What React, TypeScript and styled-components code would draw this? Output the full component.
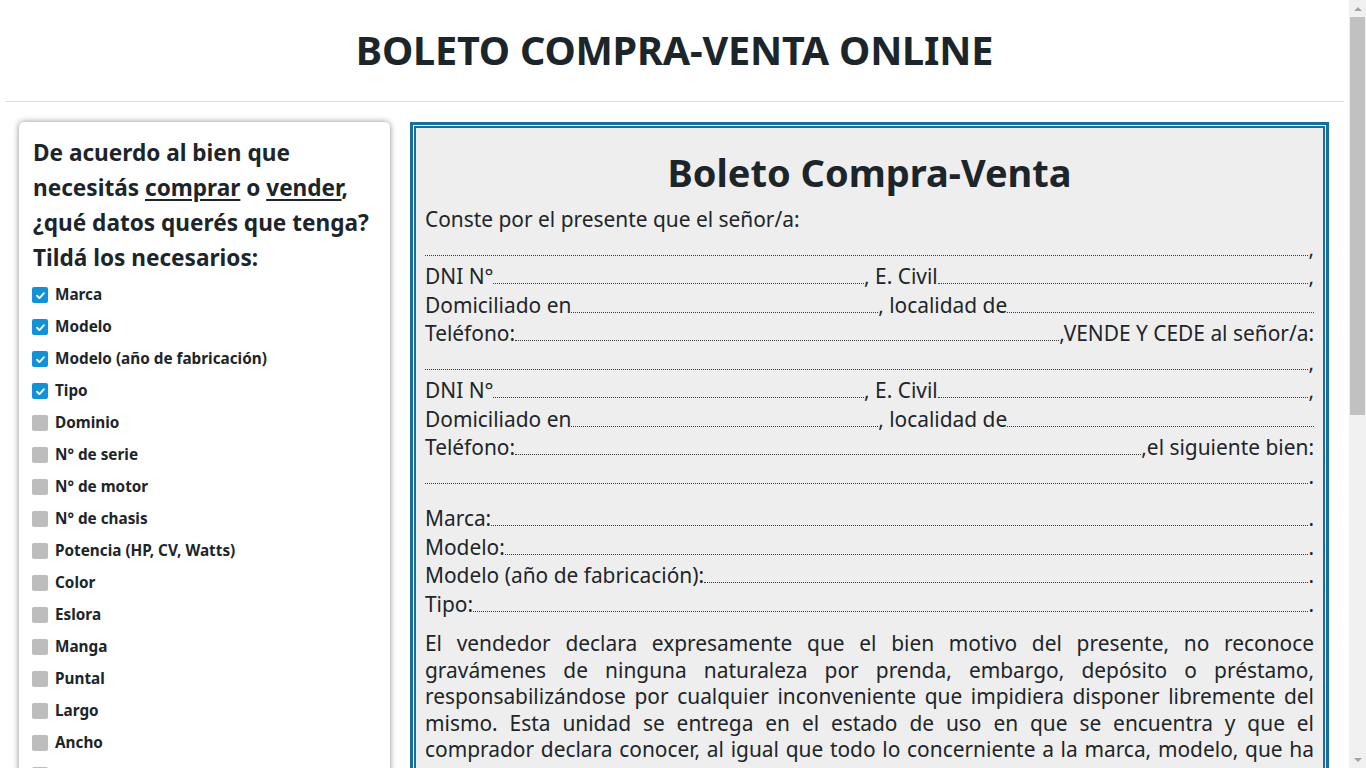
import React from "react";
import styled, { createGlobalStyle } from "styled-components";

const GlobalStyle = createGlobalStyle`
  html, body { margin: 0; padding: 0; }
  body {
    font-family: "Noto Sans", "Open Sans", sans-serif;
    color: #212529;
    background: #ffffff;
    padding-right: 17px;
  }
  * { box-sizing: border-box; }
`;

const ScrollTrack = styled.div`
  position: fixed;
  top: 0;
  right: 0;
  width: 17px;
  height: 100vh;
  background: #f0f0f0;
  display: flex;
  flex-direction: column;
  align-items: center;
`;

const ScrollArrow = styled.div<{ $down?: boolean }>`
  height: 17px;
  width: 17px;
  display: flex;
  align-items: center;
  justify-content: center;
  &::after {
    content: "";
    border-left: 4px solid transparent;
    border-right: 4px solid transparent;
    ${(p) => (p.$down ? "border-top: 4px solid #a3a3a3;" : "border-bottom: 4px solid #a3a3a3;")}
  }
`;

const ScrollThumb = styled.div`
  width: 15px;
  height: 398px;
  background: #c1c1c1;
`;

const ScrollSpacer = styled.div`
  flex: 1;
`;

const Header = styled.header`
  margin: 0 5px;
  height: 102px;
  border-bottom: 1px solid #dedede;
  display: flex;
  align-items: center;
  justify-content: center;
`;

const Title = styled.h1`
  margin: 0 0 2px;
  font-size: 39.6px;
  font-weight: 700;
  letter-spacing: -0.2px;
  color: #1c2529;
`;

const Main = styled.main`
  display: flex;
  align-items: flex-start;
  gap: 20px;
  padding: 20px 20px 40px 19px;
`;

const Sidebar = styled.aside`
  flex: 0 0 371px;
  background: #fff;
  border-radius: 5px;
  box-shadow: 0 0 6px rgba(0, 0, 0, 0.45);
  padding: 13px 10px 20px 14px;
`;

const Question = styled.h3`
  margin: 0 0 3px;
  font-size: 22.6px;
  line-height: 35px;
  font-weight: 700;
  color: #1c2529;
  u { text-underline-offset: 3px; text-decoration-thickness: 2px; }
`;

const OptionList = styled.ul`
  list-style: none;
  margin: 0;
  padding: 0;
`;

const Option = styled.li`
  display: flex;
  align-items: center;
  gap: 7px;
  height: 32px;
  font-size: 15.3px;
  font-weight: 700;
  color: #1c2529;
`;

const Box = styled.span<{ $checked: boolean }>`
  width: 16px;
  height: 16px;
  margin-left: -1px;
  border-radius: 2px;
  background: ${(p) => (p.$checked ? "#1292d6" : "#bdbdbd")};
  display: inline-flex;
  align-items: center;
  justify-content: center;
  flex: 0 0 16px;
  margin-top: 2px;
`;

const Doc = styled.section`
  flex: 1;
  min-width: 0;
  background: #eeeeee;
  border: 3px solid #17709b;
  box-shadow: inset 0 0 0 1px #ffffff, inset 0 0 0 3px #17709b;
  padding: 24px 12px 40px 12px;
  color: #212529;
  font-size: 20.9px;
`;

const DocTitle = styled.h2`
  margin: 0 0 10px;
  text-align: center;
  font-size: 38px;
  line-height: 46px;
  font-weight: 700;
  color: #1c2529;
`;

const Line = styled.div`
  display: flex;
  align-items: baseline;
  line-height: 28.5px;
  height: 28.5px;
  white-space: nowrap;
`;

const Fill = styled.span`
  flex: 1;
  height: 0;
  border-bottom: 1px dotted #3a3a3a;
`;

const Block = styled.div`
  margin-top: 14px;
`;

const Paragraph = styled.p`
  margin: 12px 0 0;
  text-align: justify;
  line-height: 26.5px;
`;

const Check = () => (
  <svg width="11" height="11" viewBox="0 0 12 12">
    <path d="M2.2 6.3 L4.8 8.8 L9.8 3.4" fill="none" stroke="#fff" strokeWidth="2" strokeLinecap="round" strokeLinejoin="round" />
  </svg>
);

const options: [string, boolean][] = [
  ["Marca", true],
  ["Modelo", true],
  ["Modelo (año de fabricación)", true],
  ["Tipo", true],
  ["Dominio", false],
  ["N° de serie", false],
  ["N° de motor", false],
  ["N° de chasis", false],
  ["Potencia (HP, CV, Watts)", false],
  ["Color", false],
  ["Eslora", false],
  ["Manga", false],
  ["Puntal", false],
  ["Largo", false],
  ["Ancho", false],
  ["Calado", false],
  ["Matrícula", false],
];

const Person = ({ end }: { end: string }) => (
  <>
    <Line>
      <Fill />,
    </Line>
    <Line>
      DNI N°<Fill />, E. Civil<Fill />,
    </Line>
    <Line>
      Domiciliado en<Fill />, localidad de<Fill />
    </Line>
    <Line>
      Teléfono:<Fill />
      {end}
    </Line>
  </>
);

export default function App() {
  return (
    <>
      <GlobalStyle />
      <Header>
        <Title>BOLETO COMPRA-VENTA ONLINE</Title>
      </Header>
      <Main>
        <Sidebar>
          <Question>
            De acuerdo al bien que necesitás <u>comprar</u> o <u>vender</u>, ¿qué datos querés que tenga? Tildá los necesarios:
          </Question>
          <OptionList>
            {options.map(([label, checked]) => (
              <Option key={label}>
                <Box $checked={checked}>{checked && <Check />}</Box>
                {label}
              </Option>
            ))}
          </OptionList>
        </Sidebar>
        <Doc>
          <DocTitle>Boleto Compra-Venta</DocTitle>
          <Line>Conste por el presente que el señor/a:</Line>
          <Person end=",VENDE Y CEDE al señor/a:" />
          <Person end=",el siguiente bien:" />
          <Line>
            <Fill />.
          </Line>
          <Block>
            <Line>
              Marca:<Fill />.
            </Line>
            <Line>
              Modelo:<Fill />.
            </Line>
            <Line>
              Modelo (año de fabricación):<Fill />.
            </Line>
            <Line>
              Tipo:<Fill />.
            </Line>
          </Block>
          <Paragraph>
            El vendedor declara expresamente que el bien motivo del presente, no reconoce gravámenes de ninguna naturaleza por prenda, embargo, depósito o préstamo, responsabilizándose por cualquier inconveniente que impidiera disponer libremente del mismo. Esta unidad se entrega en el estado de uso en que se encuentra y que el comprador declara conocer, al igual que todo lo concerniente a la marca, modelo, que ha sido revisado por el comprador a su entera satisfacción, no teniendo nada que reclamar al respecto en el futuro.
          </Paragraph>
          <Paragraph>
            El precio total y definitivo de la presente operación se fija en la suma de pesos ........................................................................................, que el vendedor recibe en este acto de conformidad, sirviendo el presente de suficiente recibo y carta de pago.
          </Paragraph>
        </Doc>
      </Main>
      <ScrollTrack aria-hidden="true">
        <ScrollArrow />
        <ScrollThumb />
        <ScrollSpacer />
        <ScrollArrow $down />
      </ScrollTrack>
    </>
  );
}
